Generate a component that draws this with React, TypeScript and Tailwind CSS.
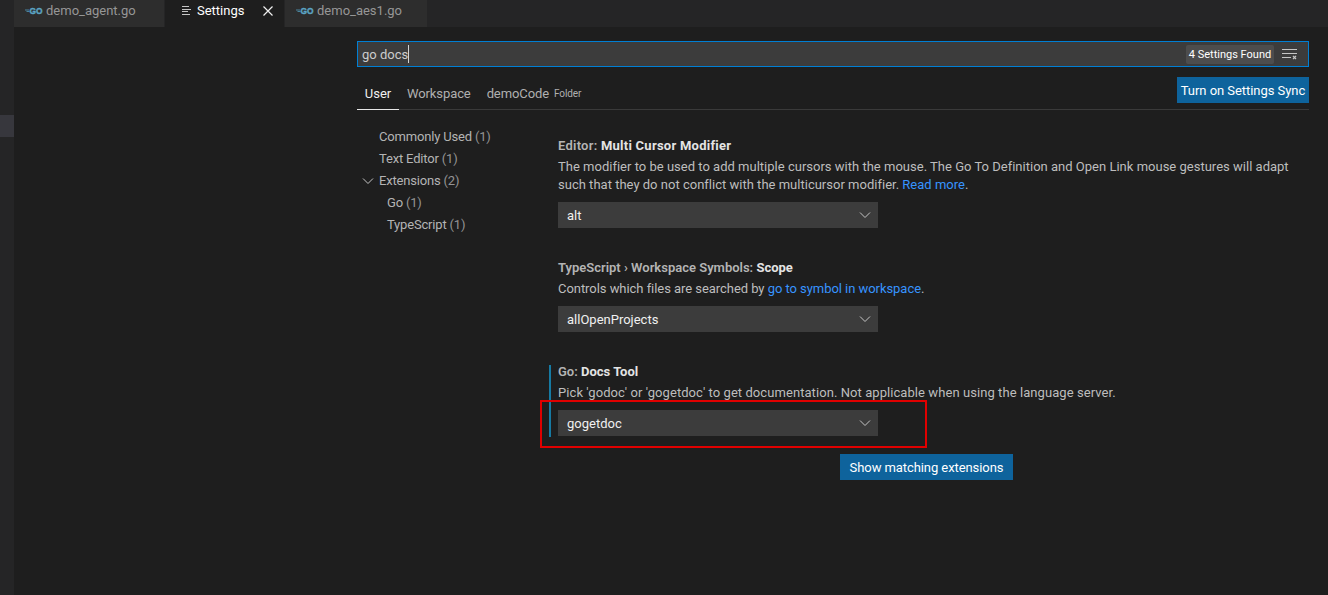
import React from "react";

const font = { fontFamily: '"Roboto", "Liberation Sans", sans-serif' };

function GoIcon() {
  return (
    <svg width="18" height="8" viewBox="0 0 18 8" className="shrink-0" fill="none">
      <path d="M0 3h4M1.5 4.5h3" stroke="#519aba" strokeWidth="0.8" />
      <text x="4.5" y="7" fontSize="8.4" fontWeight="700" fill="#5ba4c4" stroke="#5ba4c4" strokeWidth="0.4" fontFamily="Liberation Sans, sans-serif">GO</text>
    </svg>
  );
}

function Tab({ label, w }: { label: string; w: string }) {
  return (
    <div className={`${w} h-full bg-[#2d2d2d] flex items-center pl-[11px] pb-[6px] gap-[3px] text-[#969696] text-[13px] mr-px`}>
      <GoIcon />
      <span>{label}</span>
    </div>
  );
}

function Chevron({ className }: { className?: string }) {
  return (
    <svg width="12" height="12" viewBox="0 0 12 12" fill="none" className={className}>
      <path d="M1 3.5l5 5 5-5" stroke="#c5c5c5" strokeWidth="1" />
    </svg>
  );
}

function Select({ value }: { value: string }) {
  return (
    <div className="w-[320px] h-[26px] bg-[#3c3c3c] flex items-center justify-between pl-[9px] pr-[7px] text-[13px] text-[#f0f0f0]">
      <span className="pt-[2px]">{value}</span>
      <Chevron />
    </div>
  );
}

function Setting({ cat, name, children, value, h, track, titleTrack, focused }: { cat: string; name: string; children: React.ReactNode; value: string; h: string; track: string; titleTrack: string; focused?: boolean }) {
  return (
    <div className={`${h} flex`}>
      <div className={`w-[2px] h-[72px] mt-[5px] mr-[7px] ${focused ? "bg-[#167aa3]" : ""}`} />
      <div className="flex-1">
        <div className={`h-[22px] pt-[2px] flex items-center text-[13px] font-semibold text-[#b4b4b4] ${titleTrack}`}>
          <span>{cat}&nbsp;</span>
          <span className="text-[#e4e4e4] font-bold">{name}</span>
        </div>
        <div className={`mt-[2px] text-[13px] leading-[18px] text-[#bdbdbd] ${track}`}>{children}</div>
        <div className="mt-[8px]">
          <Select value={value} />
        </div>
      </div>
    </div>
  );
}

function Link({ children }: { children: React.ReactNode }) {
  return <span className="text-[#3794ff]">{children}</span>;
}

function Toc({ label, count, pad, open }: { label: string; count: string; pad: string; open?: boolean }) {
  return (
    <div className={`h-[22px] flex items-center ${pad} text-[13px] tracking-[-0.18px] text-[#b4b4b4] relative`}>
      {open && <Chevron className="absolute left-[5px] top-[5px]" />}
      <span>{label}&nbsp;</span>
      <span className="text-[#949494]">{count}</span>
    </div>
  );
}

export default function App() {
  return (
    <div style={font} className="relative w-[1328px] h-[595px] overflow-hidden bg-[#1e1e1e] flex">
      <div className="w-[14px] h-full bg-[#252526] pt-[115px] shrink-0">
        <div className="h-[22px] bg-[#37373d]" />
      </div>
      <div className="flex-1 flex flex-col">
        <div className="h-[27px] bg-[#252526] flex shrink-0">
          <Tab label="demo_agent.go" w="w-[150px]" />
          <div className="w-[119px] h-full bg-[#1e1e1e] flex items-center pl-[17px] pb-[6px] text-white text-[13px] mr-px">
            <svg width="9" height="10" viewBox="0 0 9 10" className="mr-[6px]" fill="none" stroke="#c5c5c5" strokeWidth="1">
              <path d="M0 0.5h7M0 3.5h9M0 5.5h6M0 8.5h8" />
            </svg>
            <span>Settings</span>
            <svg width="10" height="10" viewBox="0 0 10 10" className="ml-[19px]" fill="none" stroke="#f0f0f0" strokeWidth="1.2">
              <path d="M0.5 0.5l9 9M9.5 0.5l-9 9" />
            </svg>
          </div>
          <Tab label="demo_aes1.go" w="w-[142px]" />
        </div>
        <div className="flex-1 pl-[343px] pr-[19px] pt-[14px]">
          <div className="h-[26px] bg-[#3c3c3c] border border-[#007fd4] flex items-center pl-[4px] pr-[11px] text-[13px] text-[#cccccc]">
            <span className="pt-[2px]">go docs</span>
            <div className="w-px h-[18px] bg-[#d4d4d4]" />
            <div className="ml-auto h-[19px] w-[88px] pt-[2px] bg-[#4d4d4d] rounded-[2px] flex items-center justify-center text-[11px] text-white whitespace-nowrap">4 Settings Found</div>
            <svg width="15" height="12" viewBox="0 0 15 12" className="ml-[8px]" fill="none" stroke="#c5c5c5" strokeWidth="1">
              <path d="M0 1.5h15M0 5.5h15M0 9.5h9" />
              <path d="M11 8l3 3M14 8l-3 3" strokeWidth="1.2" />
            </svg>
          </div>
          <div className="h-[43px] border-b border-[#3a3a3a] flex items-end justify-between">
            <div className="flex h-[31px] text-[13px] text-[#b0b0b0]">
              <div className="w-[42px] border-b border-[#e7e7e7] text-[#f0f0f0] flex items-center justify-center -mb-px h-[32px]">User</div>
              <div className="ml-[8px] flex items-center tracking-[-0.1px]">Workspace</div>
              <div className="ml-[16px] flex items-center tracking-[-0.1px]">demoCode<span className="ml-[5px] text-[10px] text-[#b0b0b0]">Folder</span></div>
            </div>
            <div className="h-[26px] w-[132px] mb-[6px] pt-[2px] bg-[#0e639c] flex items-center justify-center text-[13px] tracking-[-0.05px] text-white whitespace-nowrap">Turn on Settings Sync</div>
          </div>
          <div className="flex pt-[16px]">
            <div className="w-[192px] shrink-0">
              <Toc label="Commonly Used" count="(1)" pad="pl-[22px]" />
              <Toc label="Text Editor" count="(1)" pad="pl-[22px]" />
              <Toc label="Extensions" count="(2)" pad="pl-[22px]" open />
              <Toc label="Go" count="(1)" pad="pl-[30px]" />
              <Toc label="TypeScript" count="(1)" pad="pl-[30px]" />
            </div>
            <div className="flex-1 pt-[8px]">
              <Setting h="h-[122px]" track="tracking-[0.01px]" titleTrack="tracking-[0.25px]" cat="Editor:" name="Multi Cursor Modifier" value="alt">
                The modifier to be used to add multiple cursors with the mouse. The Go To Definition and Open Link mouse gestures will adapt<br />
                such that they do not conflict with the multicursor modifier. <Link>Read more</Link>.
              </Setting>
              <Setting h="h-[104px]" track="tracking-[-0.05px]" titleTrack="" cat="TypeScript › Workspace Symbols:" name="Scope" value="allOpenProjects">
                Controls which files are searched by <Link>go to symbol in workspace</Link>.
              </Setting>
              <Setting h="h-[94px]" track="tracking-[0.07px]" titleTrack="" cat="Go:" name="Docs Tool" value="gogetdoc" focused>
                Pick 'godoc' or 'gogetdoc' to get documentation. Not applicable when using the language server.
              </Setting>
              <div className="w-[173px] h-[26px] ml-[291px] pt-[2px] bg-[#0e639c] flex items-center justify-center text-[13px] tracking-[-0.08px] text-white whitespace-nowrap">Show matching extensions</div>
            </div>
          </div>
        </div>
      </div>
      <div className="absolute left-[540px] top-[400px] w-[387px] h-[48px] border-2 border-[#e00000]" />
    </div>
  );
}
